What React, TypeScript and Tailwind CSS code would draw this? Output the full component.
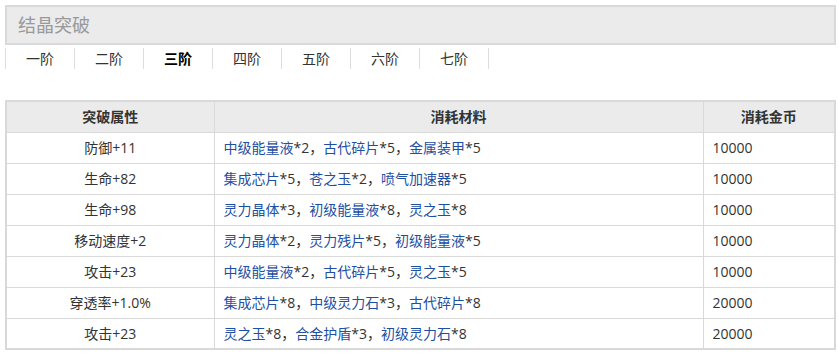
import React from 'react';

type Mat = [string, number];

const tiers = ['一阶', '二阶', '三阶', '四阶', '五阶', '六阶', '七阶'];

const rows: { attr: string; mats: Mat[]; gold: string }[] = [
  { attr: '防御+11', mats: [['中级能量液', 2], ['古代碎片', 5], ['金属装甲', 5]], gold: '10000' },
  { attr: '生命+82', mats: [['集成芯片', 5], ['苍之玉', 2], ['喷气加速器', 5]], gold: '10000' },
  { attr: '生命+98', mats: [['灵力晶体', 3], ['初级能量液', 8], ['灵之玉', 8]], gold: '10000' },
  { attr: '移动速度+2', mats: [['灵力晶体', 2], ['灵力残片', 5], ['初级能量液', 5]], gold: '10000' },
  { attr: '攻击+23', mats: [['中级能量液', 2], ['古代碎片', 5], ['灵之玉', 5]], gold: '10000' },
  { attr: '穿透率+1.0%', mats: [['集成芯片', 8], ['中级灵力石', 3], ['古代碎片', 8]], gold: '20000' },
  { attr: '攻击+23', mats: [['灵之玉', 8], ['合金护盾', 3], ['初级灵力石', 8]], gold: '20000' },
];

export default function App() {
  return (
    <div
      className="w-[839px] h-[355px] bg-white pl-[5px] pt-[5px] text-[14px] text-[#333]"
      style={{ fontFamily: '"Open Sans", "Noto Sans CJK SC", sans-serif' }}
    >
      {/* Title bar */}
      <div className="w-[831px] h-[40px] border-2 border-[#d9d9d9] bg-[#ebebeb] flex items-center pl-[11px]">
        <span className="text-[18px] text-[#999] leading-none">结晶突破</span>
      </div>

      {/* Tier tabs */}
      <div className="flex mt-[3px] h-[21px]">
        <div className="w-px bg-[#ddd]" />
        {tiers.map((t, i) => (
          <div
            key={t}
            className={`w-[69px] flex items-center justify-center border-r border-[#ddd] leading-none ${
              i === 2 ? 'font-bold text-black' : ''
            }`}
          >
            {t}
          </div>
        ))}
      </div>

      {/* Breakthrough table */}
      <table className="mt-[31px] w-[831px] border-collapse border-2 border-[#d9d9d9] table-fixed">
        <colgroup>
          <col className="w-[208px]" />
          <col className="w-[489px]" />
          <col />
        </colgroup>
        <thead>
          <tr className="bg-[#ebebeb] h-[31px]">
            <th className="border border-[#d9d9d9] font-bold">突破属性</th>
            <th className="border border-[#d9d9d9] font-bold">消耗材料</th>
            <th className="border border-[#d9d9d9] font-bold">消耗金币</th>
          </tr>
        </thead>
        <tbody>
          {rows.map((r, i) => (
            <tr key={i} className="h-[31px]">
              <td className="border border-[#d9d9d9] text-center">{r.attr}</td>
              <td className="border border-[#d9d9d9] pl-[9px]">
                {r.mats.map(([name, n], j) => (
                  <span key={j}>
                    <span className="text-[#1e50a2]">{name}</span>*{n}
                    {j < r.mats.length - 1 ? '，' : ''}
                  </span>
                ))}
              </td>
              <td className="border border-[#d9d9d9] pl-[9px]">{r.gold}</td>
            </tr>
          ))}
        </tbody>
      </table>
    </div>
  );
}
